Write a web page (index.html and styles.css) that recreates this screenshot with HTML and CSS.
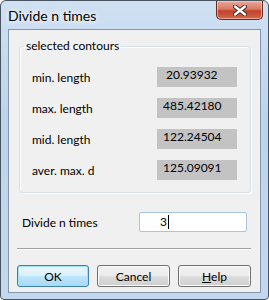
FILE: index.html
```html
<!DOCTYPE html>
<html lang="en">
  <head>
    <meta charset="UTF-8" />
    <title>Divide n times</title>
    <link rel="stylesheet" href="styles.css">
  </head>
  <body>
    <div class="window">
      <div class="titlebar">
        <span class="title">Divide n times</span>
        <button class="close" aria-label="Close">
          <svg width="14" height="11" viewBox="0 0 14 11">
            <path d="M2 1.5 L12 9.5 M12 1.5 L2 9.5" stroke="#3a2a2a" stroke-width="4.2" stroke-linecap="round" />
            <path d="M2 1.5 L12 9.5 M12 1.5 L2 9.5" stroke="#fff" stroke-width="2.4" stroke-linecap="round" />
          </svg>
        </button>
      </div>

      <main class="client">
        <fieldset class="group">
          <legend>selected contours</legend>
          <div class="row">
            <span>min. length</span>
            <span class="value first">20.93932</span>
          </div>
          <div class="row">
            <span>max. length</span>
            <span class="value">485.42180</span>
          </div>
          <div class="row">
            <span>mid. length</span>
            <span class="value">122.24504</span>
          </div>
          <div class="row">
            <span>aver. max. d</span>
            <span class="value">125.09091</span>
          </div>
        </fieldset>

        <div class="divide">
          <label for="times">Divide n times</label>
          <div class="input" id="times">3<span class="caret"></span></div>
        </div>

        <hr class="separator" />

        <div class="buttons">
          <button class="btn default">OK</button>
          <button class="btn">Cancel</button>
          <button class="btn"><u>H</u>elp</button>
        </div>
      </main>
    </div>
  </body>
</html>
```

FILE: styles.css
```css
/* Reset */
* {
  margin: 0;
  padding: 0;
  box-sizing: border-box;
}

body {
  font-family: Lato, "Noto Sans", sans-serif;
  font-size: 12px;
  color: #000;
  background: #fff;
}

.window {
  width: 269px;
  height: 300px;
  border: 1px solid #4a5460;
  border-radius: 6px 6px 4px 4px;
  background: linear-gradient(180deg, #cfe0f2 0%, #bcd4ec 40%, #c3d8ee 100%);
  display: flex;
  flex-direction: column;
}

.titlebar {
  height: 28px;
  display: flex;
  justify-content: space-between;
  align-items: flex-start;
  padding-left: 7px;
}

.title {
  font-size: 14px;
  line-height: 29px;
  color: #000;
  text-shadow: 0 0 8px #fff, 0 0 4px #fff;
}

.close {
  width: 47px;
  height: 19px;
  margin-right: 5px;
  border: 1px solid #6b2b22;
  border-top: none;
  border-radius: 0 0 5px 5px;
  background: linear-gradient(180deg, #e9a99a 0%, #d87a64 45%, #c2412a 55%, #d2684a 100%);
  box-shadow: inset 0 0 0 1px rgba(255, 210, 200, 0.6);
  display: flex;
  align-items: center;
  justify-content: center;
}

.client {
  flex: 1;
  margin: 0 7px 6px 7px;
  background: #f0f0f0;
  border: 1px solid #8497ad;
  display: flex;
  flex-direction: column;
  padding: 9px 9px 0 10px;
}

.group {
  border: 1px solid #d5dfe5;
  border-radius: 3px;
  box-shadow: inset 1px 1px 0 #fff, 1px 1px 0 #fff;
  padding: 14px 13px 12px 12px;
  display: flex;
  flex-direction: column;
  gap: 11px;
}

.group legend {
  padding: 0 2px;
  margin-left: -8px;
  line-height: 14px;
}

.row {
  display: flex;
  align-items: center;
  justify-content: space-between;
  height: 20px;
}

.value {
  width: 80px;
  height: 20px;
  background: #c3c3c3;
  padding: 1px 0 0 6px;
  line-height: 14px;
}

.value.first {
  padding-left: 9px;
}

.divide {
  display: flex;
  align-items: center;
  justify-content: space-between;
  margin-top: 19px;
  padding: 0 4px 0 3px;
}

.input {
  width: 108px;
  height: 20px;
  background: #fff;
  border: 1px solid #a9c4df;
  border-radius: 2px;
  padding-left: 20px;
  line-height: 18px;
  display: flex;
  align-items: center;
}

.caret {
  display: inline-block;
  width: 1px;
  height: 14px;
  background: #000;
  margin-left: 1px;
}

.separator {
  border: none;
  border-top: 1px solid #a0a0a0;
  border-bottom: 1px solid #fff;
  margin: 16px 0 0 -2px;
}

.buttons {
  display: flex;
  gap: 8px;
  margin-top: 15px;
  margin-left: -2px;
}

.btn {
  font-family: inherit;
  font-size: 12px;
  width: 74px;
  height: 22px;
  border: 1px solid #707070;
  border-radius: 3px;
  background: linear-gradient(180deg, #f2f2f2 0%, #ebebeb 50%, #dddddd 51%, #cfcfcf 100%);
  box-shadow: inset 0 0 0 1px #fcfcfc;
  color: #000;
}

.btn.default {
  width: 73px;
  border-color: #3c7fb1;
  background: linear-gradient(180deg, #eaf6fd 0%, #d9f0fc 50%, #bee6fd 51%, #a7d9f5 100%);
  box-shadow: inset 0 0 0 1px #9fe2f8;
}
```
